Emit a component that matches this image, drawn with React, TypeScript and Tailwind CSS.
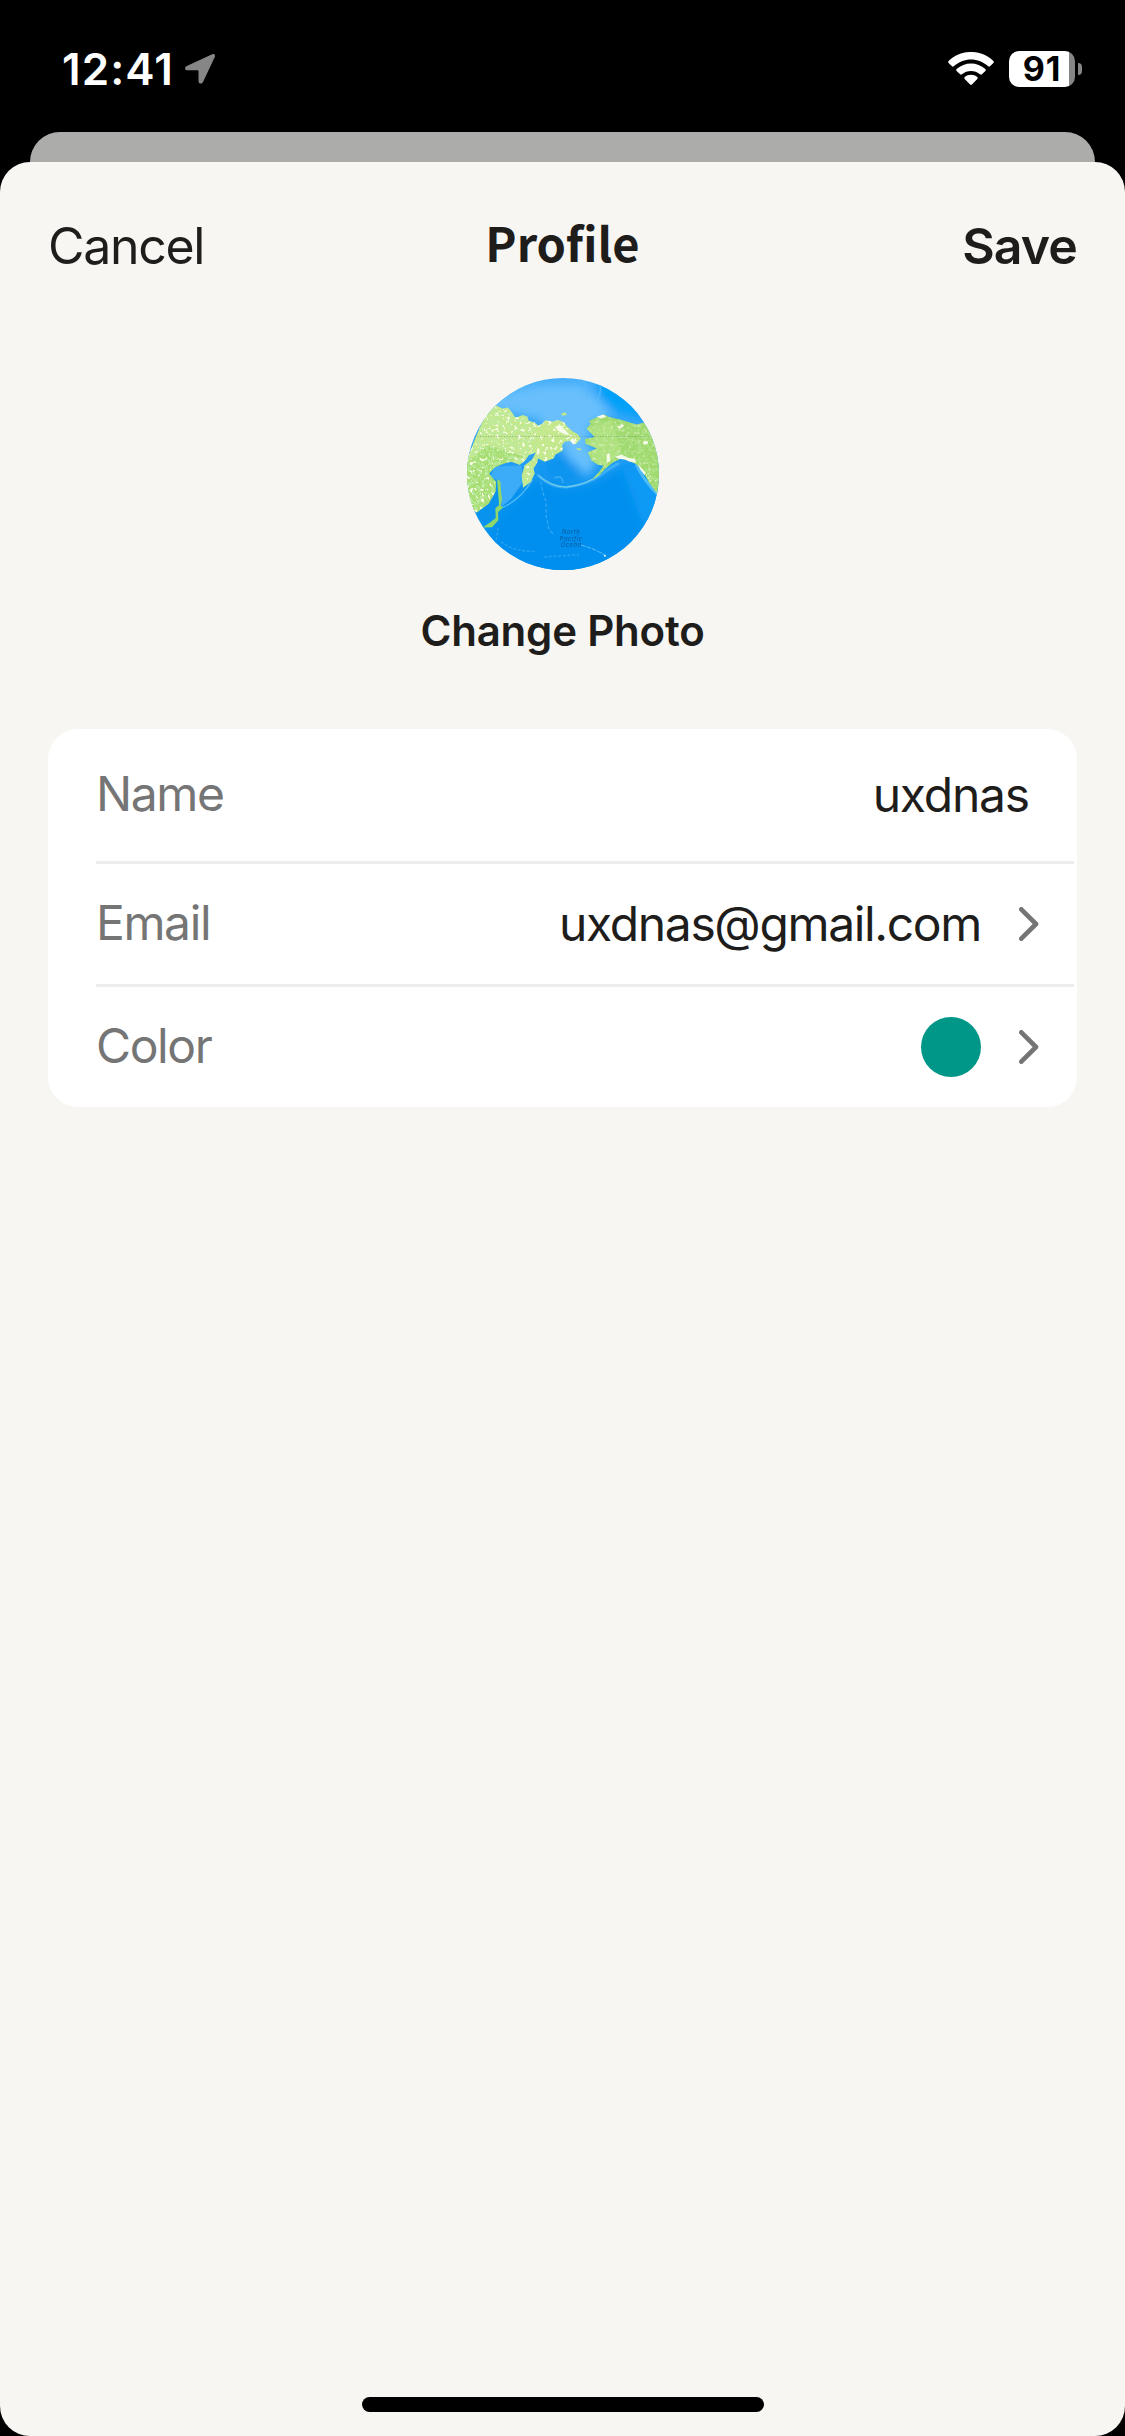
import type { ReactNode } from "react";
import { clsx } from "clsx";

const ASIA =
  "M30 300 50 250 65 212 92 150 108 132 125 121 142 130 160 127 172 142 182 158 205 150 218 155 222 168 240 172 250 181 264 175 272 165 292 170 310 165 328 172 338 186 352 198 370 208 378 220 362 238 350 226 330 230 322 240 324 256 302 268 296 280 270 290 250 280 246 295 236 310 240 325 228 350 205 368 201 330 210 300 232 283 243 262 222 270 212 285 195 299 170 290 150 294 122 300 118 308 103 325 108 340 124 350 122 380 102 415 66 442 30 420Z";
const ALASKA =
  "M395 190 408 176 402 168 430 155 447 148 462 156 500 165 545 178 562 174 625 170 625 400 604 382 582 352 566 322 545 298 520 286 498 280 474 292 452 310 432 330 410 345 434 318 446 302 428 298 410 286 399 262 426 250 418 240 392 236 390 222 420 216 405 200Z";
const JAPAN =
  "M127 342 137 348 139 380 142 400 138 422 146 426 130 440 131 465 112 486 84 487 106 472 123 458 122 428 133 420 130 380Z";

function MapAvatar() {
  return (
    <svg viewBox="37 39 575 575" className="size-48 rounded-full" role="img" aria-label="Profile photo">
      <defs>
        <linearGradient id="sea" x1="0" y1="0" x2="0" y2="1">
          <stop offset="0" stopColor="#45aefa" />
          <stop offset="0.4" stopColor="#2ba0f6" />
          <stop offset="0.6" stopColor="#0892ee" />
          <stop offset="1" stopColor="#0a96f0" />
        </linearGradient>
        <filter id="soft" x="-20%" y="-20%" width="140%" height="140%">
          <feGaussianBlur stdDeviation="12" />
        </filter>
        {/* speckled vegetation, kept inside the land shapes */}
        <filter id="speckle" x="0" y="0" width="100%" height="100%">
          <feTurbulence type="fractalNoise" baseFrequency="0.1" numOctaves="4" seed="4" />
          <feColorMatrix values="0 0 0 0 0.5  0 0 0 0 0.83  0 0 0 0 0.37  0 12 0 0 -6" />
          <feComposite in2="SourceGraphic" operator="in" />
        </filter>
        <filter id="snow" x="0" y="0" width="100%" height="100%">
          <feTurbulence type="fractalNoise" baseFrequency="0.09" numOctaves="4" seed="11" />
          <feColorMatrix values="0 0 0 0 0.93  0 0 0 0 0.97  0 0 0 0 0.76  12 0 0 0 -7.4" />
          <feComposite in2="SourceGraphic" operator="in" />
        </filter>
        <clipPath id="land">
          <path d={ASIA} />
        </clipPath>
      </defs>

      <rect x="37" y="39" width="575" height="575" fill="url(#sea)" />
      <g filter="url(#soft)">
        <path d="M110 90 250 60 380 60 430 100 470 150 410 175 400 240 425 280 400 335 340 275 320 240 250 160 100 130Z" fill="#68bffc" />
        <path d="M425 30 640 40 640 155 560 160 480 138 430 95Z" fill="#04a0f8" />
        <path d="M255 290 320 262 350 300 385 340 330 362 270 340Z" fill="#0a94f0" />
        <path d="M245 345 320 380 400 370 470 325 530 290 640 410 640 640 100 640 110 480 170 420Z" fill="#068fee" />
        <path d="M500 310 550 300 640 420 640 520 560 470Z" fill="#089af5" />
      </g>
      <path d="M118 305 200 300 205 350 170 400 140 425 135 350 108 335Z" fill="#3dacf8" />

      <g fill="none" strokeLinecap="round">
        <path d="M146 426Q200 400 232 345" stroke="#4fbaf8" strokeWidth="4" />
        <path d="M250 330Q290 368 335 366Q400 358 440 328T490 296" stroke="#45b4f8" strokeWidth="8" opacity="0.8" />
        <path d="M254 334Q290 364 335 366Q395 358 436 328" stroke="#8dd8e0" strokeWidth="2.5" />
        <path d="M545 300Q565 345 610 390" stroke="#4ebcf9" strokeWidth="8" />
        <path d="M300 338Q322 328 324 352" stroke="#35a8f6" strokeWidth="5" />
        <path d="M380 45Q400 60 395 90M432 50Q445 75 425 110" stroke="#58b8fb" strokeWidth="5" opacity="0.7" />
        <path d="M258 350 265 385 274 410 274 450 282 490 296 508" stroke="#32a6f3" strokeWidth="4" strokeDasharray="8 9" />
        <path d="M380 540Q420 550 450 570" stroke="#55bbf4" strokeWidth="3" strokeDasharray="12 5" />
        <path d="M130 490 122 540M140 530Q180 560 240 558M270 575 370 568" stroke="#249ff0" strokeWidth="5" strokeDasharray="5 9" />
      </g>

      <path d={ASIA} fill="#c4e88e" />
      <path d="M30 300 100 240 210 275 150 294 118 308 103 325 124 350 122 380 102 415 66 442 30 420Z" fill="#a8de73" />
      <path d={ALASKA} fill="#a0da6e" />
      <path d="M395 190 470 165 500 260 450 300 428 298 399 262 426 250 392 236 420 216Z" fill="#aee07b" />
      <path d={JAPAN} fill="#8fd76b" />
      <path d="M318 147 330 141 337 148 325 153ZM365 249 380 251 378 256 366 253Z" fill="#b9e491" />
      <g clipPath="url(#land)">
        <path
          d="M30 300 108 132 200 150 240 172 246 260 195 299 103 325 122 380 66 442 30 420ZM201 330 238 300 236 325 205 368Z"
          filter="url(#speckle)"
          opacity="0.75"
        />
      </g>
      <path d={ASIA} filter="url(#snow)" />
      <path d={ALASKA} filter="url(#speckle)" opacity="0.4" />
      <path d={ALASKA} filter="url(#snow)" opacity="0.35" />
      <path
        d="M480 275 500 268 518 278 538 281 545 293 525 290 510 283 492 281ZM425 155 445 148 454 156 436 160ZM484 182 495 185 500 175 508 183 494 191ZM548 295 556 305 572 322 569 330 557 315ZM563 230 578 228 579 237 566 239ZM455 268 464 264 466 288 456 292ZM300 185 316 180 330 195 345 210 330 208 310 198ZM345 226 354 218 364 234 355 238Z"
        fill="#f7fbe9"
      />
      <path d="M578 325 604 350M568 320 590 352" stroke="#edf8dc" strokeWidth="3" strokeDasharray="4 6" />

      <path d="M60 214H594" stroke="#516f63" strokeWidth="2" strokeDasharray="3 5" opacity="0.7" />
      <circle cx="450" cy="571" r="3" fill="#e4f8f1" />
      <g fill="#0b4a83" fontSize="17" letterSpacing="2" textAnchor="middle" fontStyle="italic" opacity="0.85">
        <text x="349" y="507">North</text>
        <text x="349" y="526">Pacific</text>
        <text x="349" y="545">Ocean</text>
      </g>
    </svg>
  );
}

function StatusBar() {
  return (
    <header className="flex h-[132px] items-start justify-between pt-[51px] pr-[43px] pl-[62px]">
      <div className="flex h-9 items-center">
        <span className="w-[123px] text-[44px] leading-9 font-semibold tracking-[1.1px] text-white">12:41</span>
        <svg viewBox="0 0 30 30" className="size-[30px]" fill="#868686">
          <path d="M27.2.3 1.8 12.1C-.8 13.5-.3 16.2 2.2 16.3H12.7Q13.5 16.3 13.5 17.2V27C13.7 30 16.6 30.5 18 28.1L29.8 3.1C30.7 1 29.1-.5 27.2.3Z" />
        </svg>
      </div>
      <div className="flex h-9 items-center">
        <svg viewBox="0 0 46 34" className="mr-[15px] h-[34px] w-[46px]" fill="#fff">
          <path d="M.6 9.1C13-3.1 33-3.1 45.4 9.1Q46.2 10 45.4 10.9L42 14.3Q41.2 15.1 40.3 14.3C30.5 5.1 15.5 5.1 5.7 14.3Q4.8 15.1 4 14.3L.6 10.9Q-.2 10 .6 9.1Z" />
          <path d="M8.6 17.1C16.7 9.5 29.3 9.5 37.4 17.1Q38.3 18 37.4 18.9L33.9 22.3Q33 23.1 32.1 22.3C27 17.8 19 17.8 13.9 22.3Q13 23.1 12.1 22.3L8.6 18.9Q7.7 18 8.6 17.1Z" />
          <path d="M16.7 25.1C20.3 22 25.7 22 29.3 25.1Q30.2 26 29.3 26.9L23.9 32.5Q23 33.4 22.1 32.5L16.7 26.9Q15.8 26 16.7 25.1Z" />
        </svg>
        <div className="mr-[3px] h-9 w-[66px] rounded-[10px] bg-[linear-gradient(90deg,#fff_60px,#868686_60px)] text-center text-[34px] leading-9 font-bold tracking-[0.8px] text-black">
          91
        </div>
        <div className="h-3 w-1 rounded-r-full bg-[#868686]" />
      </div>
    </header>
  );
}

function Chevron() {
  return (
    <svg viewBox="0 0 20 34" className="h-[34px] w-5" fill="none" stroke="#757575" strokeWidth="4.6" strokeLinecap="round" strokeLinejoin="round">
      <path d="M2.3 2.3 17 17 2.3 31.7" />
    </svg>
  );
}

type RowProps = {
  label: string;
  children: ReactNode;
  tall?: boolean;
  chevron?: boolean;
  last?: boolean;
};

function Row({ label, children, tall, chevron, last }: RowProps) {
  return (
    <div
      className={clsx(
        "mr-[3px] ml-12 flex items-center justify-between border-[#ededeb]",
        tall ? "h-[135px]" : last ? "h-[120px]" : "h-[123px]",
        !last && "border-b-[3px]",
        chevron ? "pr-[35px]" : "pr-[45px]"
      )}
    >
      <span className="pb-0.5 tracking-[-1.4px] text-[#757575]">{label}</span>
      <div className="flex items-center">
        {children}
        {chevron && (
          <span className="ml-[38px]">
            <Chevron />
          </span>
        )}
      </div>
    </div>
  );
}

export default function App() {
  return (
    <div className="flex h-[2436px] w-[1125px] flex-col bg-black font-['Inter','Liberation_Sans',sans-serif] text-[#1e1d1b]">
      <StatusBar />
      <div className="mx-[30px] h-[30px] rounded-t-[30px] bg-[#acacaa]" />

      <main className="flex flex-1 flex-col rounded-[30px] bg-[#f7f6f2] px-12">
        <div className="grid h-[168px] grid-cols-3 items-center text-[50px]">
          <button className="text-left tracking-[-1.3px]">Cancel</button>
          <h1 className="pb-[9px] text-center font-['Noto_Sans_CJK_JP',sans-serif] text-[47px] leading-[60px] font-bold">Profile</h1>
          <button className="text-right font-semibold tracking-[-0.9px]">Save</button>
        </div>

        <div className="mt-12 flex flex-col items-center">
          <MapAvatar />
          <button className="mt-[31px] text-[42px] leading-[60px] font-semibold tracking-[-0.2px]">Change Photo</button>
        </div>

        <section className="mt-[68px] rounded-[30px] bg-white text-[48px] leading-[60px]">
          <Row label="Name" tall>
            <span className="tracking-[-1.2px]">uxdnas</span>
          </Row>
          <Row label="Email" chevron>
            <span className="tracking-[-1.35px]">uxdnas@gmail.com</span>
          </Row>
          <Row label="Color" chevron last>
            <span className="size-[60px] rounded-full bg-[#009688]" />
          </Row>
        </section>

        <div className="mt-auto mb-6 h-[15px] w-[402px] self-center rounded-full bg-black" />
      </main>
    </div>
  );
}
